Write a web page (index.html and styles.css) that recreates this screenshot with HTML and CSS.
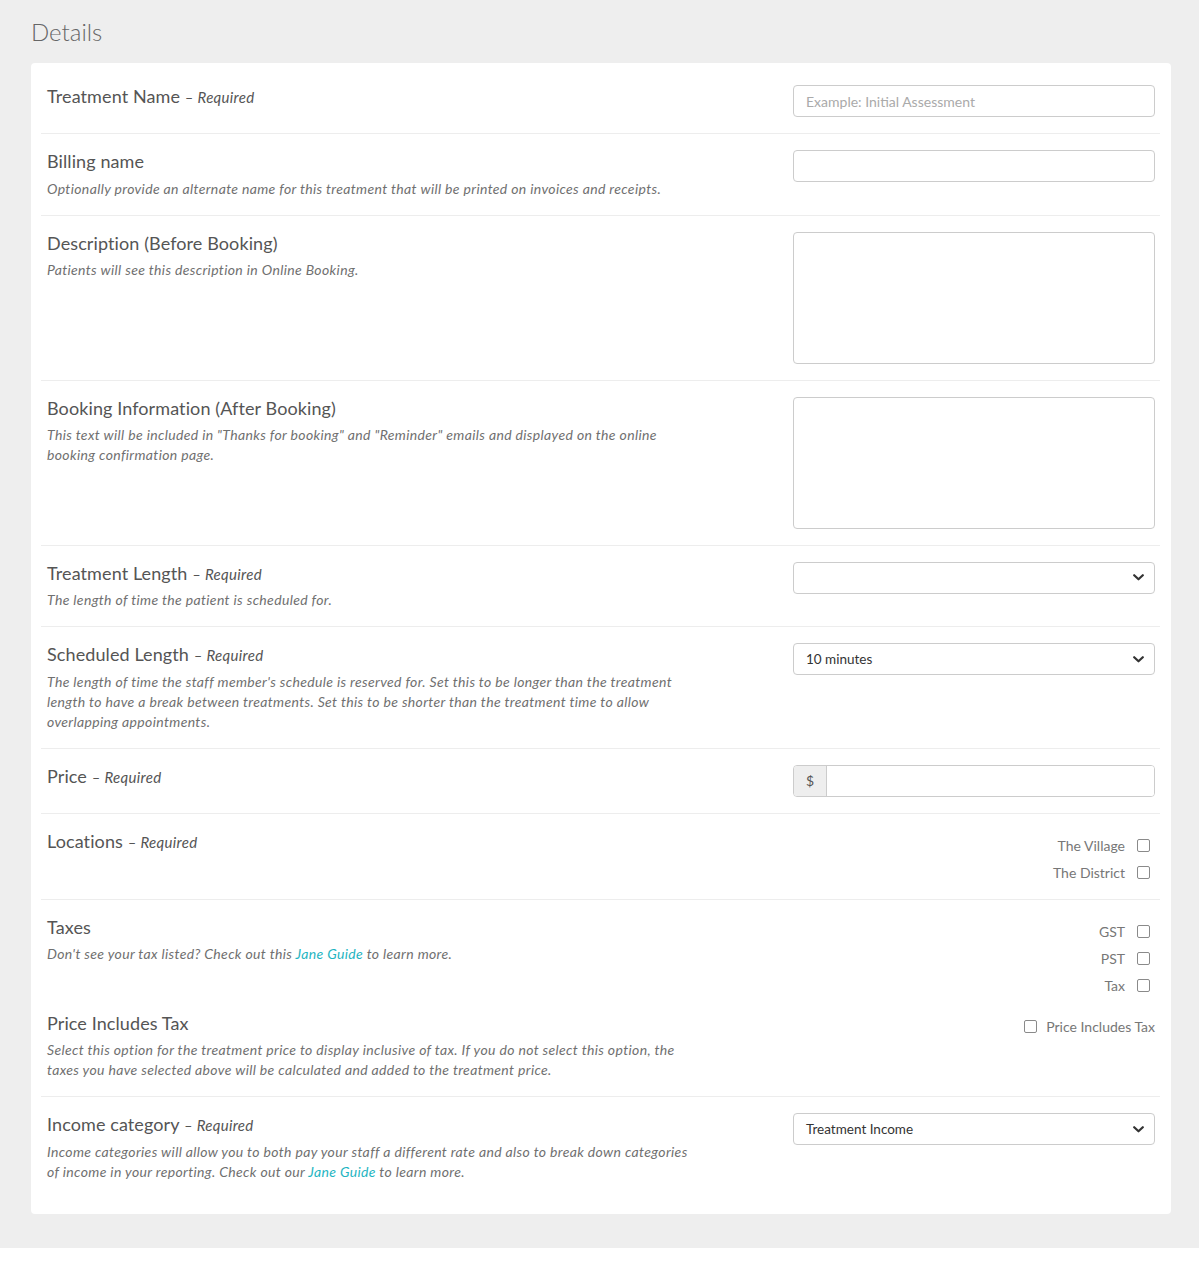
FILE: index.html
```html
<!DOCTYPE html>
<html>
<head>
<meta charset="utf-8">
<link rel="stylesheet" href="styles.css">
</head>
<body>
<div class="page">
  <h2 class="page-title">Details</h2>
  <div class="panel">
    <div class="row">
      <div class="info">
        <div class="label">Treatment Name <span class="req">– Required</span></div>
      </div>
      <div class="control"><input class="input" type="text" placeholder="Example: Initial Assessment"></div>
    </div>
    <div class="row">
      <div class="info">
        <div class="label">Billing name</div>
        <p class="desc">Optionally provide an alternate name for this treatment that will be printed on invoices and receipts.</p>
      </div>
      <div class="control"><input class="input" type="text"></div>
    </div>
    <div class="row">
      <div class="info">
        <div class="label">Description (Before Booking)</div>
        <p class="desc">Patients will see this description in Online Booking.</p>
      </div>
      <div class="control"><textarea class="input textarea"></textarea></div>
    </div>
    <div class="row">
      <div class="info">
        <div class="label">Booking Information (After Booking)</div>
        <p class="desc">This text will be included in "Thanks for booking" and "Reminder" emails and displayed on the online booking confirmation page.</p>
      </div>
      <div class="control"><textarea class="input textarea"></textarea></div>
    </div>
    <div class="row">
      <div class="info">
        <div class="label">Treatment Length <span class="req">– Required</span></div>
        <p class="desc">The length of time the patient is scheduled for.</p>
      </div>
      <div class="control">
        <div class="select"><span class="select-value"></span>
          <svg class="chev" width="11" height="7" viewBox="0 0 11 7"><polyline points="1.2,1.2 5.5,5.3 9.8,1.2" fill="none" stroke="#333" stroke-width="2.2" stroke-linecap="round" stroke-linejoin="round"/></svg>
        </div>
      </div>
    </div>
    <div class="row">
      <div class="info">
        <div class="label">Scheduled Length <span class="req">– Required</span></div>
        <p class="desc">The length of time the staff member's schedule is reserved for. Set this to be longer than the treatment length to have a break between treatments. Set this to be shorter than the treatment time to allow overlapping appointments.</p>
      </div>
      <div class="control">
        <div class="select"><span class="select-value">10 minutes</span>
          <svg class="chev" width="11" height="7" viewBox="0 0 11 7"><polyline points="1.2,1.2 5.5,5.3 9.8,1.2" fill="none" stroke="#333" stroke-width="2.2" stroke-linecap="round" stroke-linejoin="round"/></svg>
        </div>
      </div>
    </div>
    <div class="row">
      <div class="info">
        <div class="label">Price <span class="req">– Required</span></div>
      </div>
      <div class="control">
        <div class="input-group"><span class="addon">$</span><input class="group-input" type="text"></div>
      </div>
    </div>
    <div class="row">
      <div class="info">
        <div class="label">Locations <span class="req">– Required</span></div>
      </div>
      <div class="control">
        <div class="checks">
          <label class="check">The Village <span class="box"></span></label>
          <label class="check">The District <span class="box"></span></label>
        </div>
      </div>
    </div>
    <div class="row row-open">
      <div class="info">
        <div class="label">Taxes</div>
        <p class="desc">Don't see your tax listed? Check out this <a class="link" href="#">Jane Guide</a> to learn more.</p>
      </div>
      <div class="control">
        <div class="checks">
          <label class="check">GST <span class="box"></span></label>
          <label class="check">PST <span class="box"></span></label>
          <label class="check">Tax <span class="box"></span></label>
        </div>
      </div>
    </div>
    <div class="row">
      <div class="info">
        <div class="label">Price Includes Tax</div>
        <p class="desc">Select this option for the treatment price to display inclusive of tax. If you do not select this option, the taxes you have selected above will be calculated and added to the treatment price.</p>
      </div>
      <div class="control">
        <label class="check check-left"><span class="box"></span> Price Includes Tax</label>
      </div>
    </div>
    <div class="row row-last">
      <div class="info">
        <div class="label">Income category <span class="req">– Required</span></div>
        <p class="desc">Income categories will allow you to both pay your staff a different rate and also to break down categories of income in your reporting. Check out our <a class="link" href="#">Jane Guide</a> to learn more.</p>
      </div>
      <div class="control">
        <div class="select"><span class="select-value">Treatment Income</span>
          <svg class="chev" width="11" height="7" viewBox="0 0 11 7"><polyline points="1.2,1.2 5.5,5.3 9.8,1.2" fill="none" stroke="#333" stroke-width="2.2" stroke-linecap="round" stroke-linejoin="round"/></svg>
        </div>
      </div>
    </div>
  </div>
</div>
</body>
</html>
```

FILE: styles.css
```css
* { box-sizing: border-box; }
html, body { margin: 0; padding: 0; background: #ffffff; }
body { font-family: Lato, "Liberation Sans", sans-serif; color: #555; }

.page {
  background: #eeeeee;
  padding: 17px 28px 34px 31px;
}

.page-title {
  margin: 0 0 16px 0;
  font-size: 24px;
  line-height: 30px;
  font-weight: 300;
  color: #666;
}

.panel {
  background: #ffffff;
  border-radius: 4px;
  padding: 6px 11px 16px 10px;
}

.row {
  display: grid;
  grid-template-columns: 1fr 362px;
  column-gap: 20px;
  padding: 16px 5px 16px 6px;
  border-bottom: 1px solid #ededed;
}
.row-open { border-bottom: none; padding-bottom: 0; }
.row-last { border-bottom: none; }

.label {
  height: 22px;
  font-size: 18px;
  line-height: 22px;
  color: #555;
  letter-spacing: 0.1px;
  white-space: nowrap;
}
.req {
  font-size: 15px;
  line-height: 1;
  font-style: italic;
  color: #555;
  letter-spacing: 0.3px;
}

.desc {
  margin: 6.5px 0 0 0;
  max-width: 655px;
  font-size: 14px;
  line-height: 20px;
  font-style: italic;
  color: #707070;
  letter-spacing: 0.35px;
}

.link { color: #1fb5c2; text-decoration: none; }

.control { display: flex; flex-direction: column; align-items: stretch; }

.input {
  display: block;
  width: 100%;
  height: 32px;
  border: 1px solid #cccccc;
  border-radius: 4px;
  padding: 0 12px;
  font-family: Lato, "Liberation Sans", sans-serif;
  font-size: 14px;
  color: #333;
  background: #fff;
  outline: none;
}
.input::placeholder { color: #aaa; }
.textarea { height: 132px; resize: none; }

.select {
  display: flex;
  align-items: center;
  justify-content: space-between;
  height: 32px;
  border: 1px solid #cccccc;
  border-radius: 4px;
  padding: 0 10px 0 12px;
  font-size: 13.5px;
  color: #333;
  background: #fff;
}
.chev { display: block; }

.input-group {
  display: flex;
  height: 32px;
  border: 1px solid #cccccc;
  border-radius: 4px;
  overflow: hidden;
}
.addon {
  width: 33px;
  flex: none;
  background: #eeeeee;
  border-right: 1px solid #cccccc;
  display: flex;
  align-items: center;
  justify-content: center;
  font-size: 14px;
  color: #555;
}
.group-input { flex: 1; border: none; outline: none; }

.checks {
  display: flex;
  flex-direction: column;
  align-items: flex-end;
  gap: 7px;
  margin-top: 6px;
  padding-right: 5px;
}
.check {
  display: flex;
  align-items: center;
  gap: 12px;
  height: 20px;
  font-size: 14px;
  color: #777;
}
.check-left {
  align-self: flex-end;
  gap: 9px;
  margin-top: 5px;
}
.box {
  width: 13px;
  height: 13px;
  border: 1px solid #8a8a8a;
  border-radius: 2px;
  background: #fff;
  flex: none;
}
```
